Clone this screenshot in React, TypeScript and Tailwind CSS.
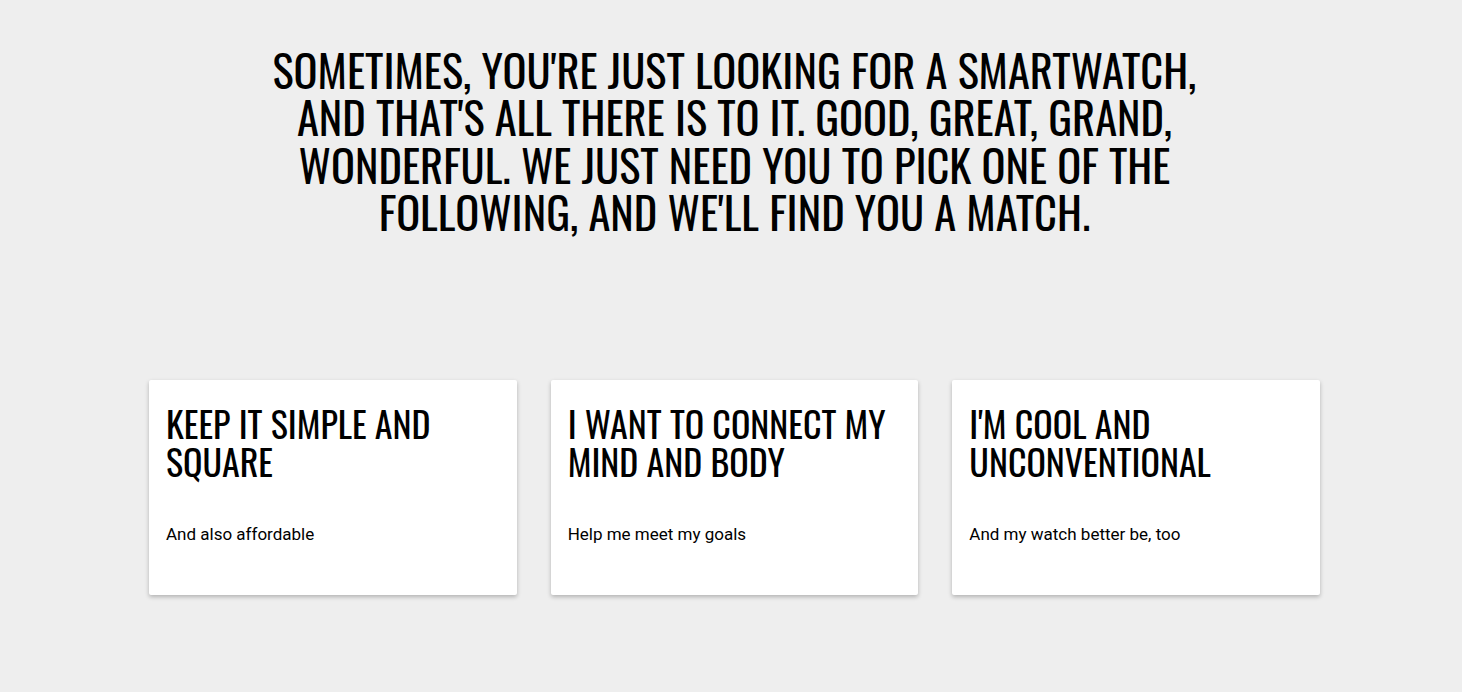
const cards = [
  { title: "Keep it simple and square", text: "And also affordable" },
  { title: "I want to connect my mind and body", text: "Help me meet my goals" },
  { title: "I'm cool and unconventional", text: "And my watch better be, too" },
];

const display = "font-['Oswald','Liberation_Sans_Narrow','DejaVu_Sans_Condensed',sans-serif]";

export default function App() {
  return (
    <div className="min-h-screen bg-[#eeeeee] font-['Roboto',sans-serif] text-black">
      {/* Intro */}
      <div className="pl-[149px] pr-[142px] pt-[46px]">
        <h1 className={`${display} text-center text-[44.5px] leading-[47.3px] font-normal uppercase`}>
          Sometimes, you're just looking for a smartwatch,
          <br />
          and that's all there is to it. Good, great, grand,
          <br />
          wonderful. We just need you to pick one of the
          <br />
          following, and we'll find you a match.
        </h1>
      </div>

      {/* Cards */}
      <div className="grid grid-cols-3 gap-[34px] pl-[149px] pr-[142px] pt-[145px]">
        {cards.map((card) => (
          <div
            key={card.title}
            className="h-[215px] rounded-[2px] bg-white px-[17px] pt-[24px] shadow-[0_2px_4px_rgba(0,0,0,0.25)]"
          >
            <h2 className={`${display} text-[36px] leading-[38.3px] font-normal uppercase`}>
              {card.title}
            </h2>
            <p className="mt-[41px] text-[17px] leading-[24px]">{card.text}</p>
          </div>
        ))}
      </div>
    </div>
  );
}
